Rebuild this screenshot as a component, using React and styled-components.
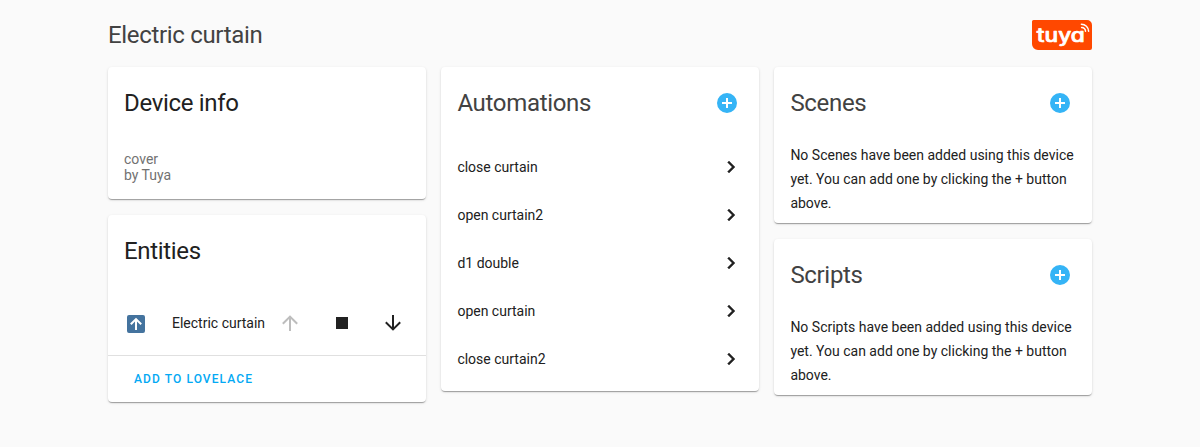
import React from "react";
import styled, { createGlobalStyle } from "styled-components";

const GlobalStyle = createGlobalStyle`
  body {
    margin: 0;
    background: #fafafa;
    color: #212121;
    font-family: Roboto, "Noto Sans", sans-serif;
    font-size: 14px;
    -webkit-font-smoothing: antialiased;
  }
  *, *::before, *::after { box-sizing: border-box; }
`;

const Page = styled.main`
  width: 984px;
  margin: 0 auto;
  padding: 20px 0 24px;
`;

const PageHeader = styled.header`
  display: flex;
  justify-content: space-between;
  align-items: center;
  height: 30px;
  margin-bottom: 17px;
`;

const PageTitle = styled.h1`
  margin: 0;
  font-size: 24px;
  font-weight: 400;
  line-height: 32px;
  letter-spacing: -0.32px;
  color: #424242;
`;

const Columns = styled.div`
  display: grid;
  grid-template-columns: 317.6px 317.2px 317.6px;
  gap: 15.8px;
  align-items: start;
`;

const Column = styled.div`
  display: flex;
  flex-direction: column;
  gap: 16px;
  min-width: 0;
`;

const Card = styled.section`
  background: #fff;
  border-radius: 4px;
  padding-bottom: ${(p) => p.$bottom ?? 8}px;
  box-shadow:
    0 2px 1px -1px rgba(0, 0, 0, 0.2),
    0 1px 1px 0 rgba(0, 0, 0, 0.14),
    0 1px 3px 0 rgba(0, 0, 0, 0.12);
`;

const CardHeader = styled.div`
  display: flex;
  justify-content: space-between;
  align-items: center;
  height: 76px;
  padding: 12px 20px 16px 16px;
`;

const CardTitle = styled.h2`
  margin: 0;
  font-size: 24px;
  font-weight: 400;
  line-height: 48px;
  letter-spacing: -0.32px;
  color: ${(p) => (p.$muted ? "#424242" : "#212121")};
`;

const IconButton = styled.button`
  display: flex;
  padding: 0;
  border: 0;
  background: none;
  color: ${(p) => p.$color || "#212121"};
`;

const DeviceDetails = styled.div`
  padding: 8px 16px 0;
  line-height: 16px;
  color: #727272;
`;

const EntityRow = styled.div`
  display: flex;
  align-items: center;
  height: 64px;
  padding: 0 20.6px 0 16px;
`;

const EntityName = styled.span`
  flex: 1;
  margin-left: 24px;
  white-space: nowrap;
`;

const CoverControls = styled.div`
  display: flex;
  gap: 27.5px;
`;

const CardActions = styled.div`
  display: flex;
  align-items: center;
  height: 47px;
  border-top: 1px solid #e0e0e0;
  padding: 0 26px;
`;

const TextButton = styled.button`
  padding: 0;
  border: 0;
  background: none;
  font-family: inherit;
  font-size: 12px;
  font-weight: 500;
  letter-spacing: 1.1px;
  text-transform: uppercase;
  color: #03a9f4;
`;

const AutomationRow = styled.div`
  display: flex;
  justify-content: space-between;
  align-items: center;
  height: 48px;
  padding: 0 16px;
`;

const EmptyText = styled.p`
  margin: 0;
  padding: 0 16px;
  line-height: 24px;
`;

const Svg = styled.svg`
  display: block;
  flex: none;
  fill: currentColor;
  stroke: currentColor;
  stroke-width: ${(p) => p.$weight || 0};
`;

const icons = {
  plus: "M17,13H13V17H11V13H7V11H11V7H13V11H17M12,2A10,10 0 0,0 2,12A10,10 0 0,0 12,22A10,10 0 0,0 22,12A10,10 0 0,0 12,2Z",
  next: "M8.59,16.58L13.17,12L8.59,7.41L10,6L16,12L10,18L8.59,16.58Z",
  up: "M13,20H11V8L5.5,13.5L4.08,12.08L12,4.16L19.92,12.08L18.5,13.5L13,8V20Z",
  down: "M11,4H13V16L18.5,10.5L19.92,11.92L12,19.84L4.08,11.92L5.5,10.5L11,16V4Z",
  stop: "M18,18H6V6H18V18Z",
  upBox: "M21,19A2,2 0 0,1 19,21H5A2,2 0 0,1 3,19V5A2,2 0 0,1 5,3H19A2,2 0 0,1 21,5V19M13,18V9.5L16.5,13L17.92,11.58L12,5.66L6.08,11.58L7.5,13L11,9.5V18H13Z",
};

function Icon({ name, weight }) {
  return (
    <Svg width="24" height="24" viewBox="0 0 24 24" $weight={weight} aria-hidden="true">
      <path d={icons[name]} />
    </Svg>
  );
}

const StateIcon = styled.span`
  padding-top: 2px;
  color: #44739e;
`;

const LogoText = styled.text`
  font-family: Inter, sans-serif;
  font-size: 18.5px;
  font-weight: 500;
  font-feature-settings: "cv11";
  fill: #fff;
  stroke: #fff;
  stroke-width: 0.7px;
  stroke-linejoin: round;
`;

function TuyaLogo() {
  return (
    <svg width="60" height="30" viewBox="0 0 60 30" aria-label="Tuya">
      <path
        fill="#ff4800"
        d="M1.5 0H55A5 5 0 0 1 60 5V28A2 2 0 0 1 58 30H6A6 6 0 0 1 0 24V1.5A1.5 1.5 0 0 1 1.5 0Z"
      />
      <LogoText x="4.8" y="21.6" textLength="48" lengthAdjust="spacingAndGlyphs">
        tuya
      </LogoText>
      <g fill="none" stroke="#fff" strokeWidth="1.5" strokeLinecap="round">
        <path d="M49.4 4.2A7.2 7.2 0 0 1 56.6 11.2" />
        <path d="M49.6 7.4A3.8 3.8 0 0 1 53.5 11.2" />
      </g>
    </svg>
  );
}

const automations = ["close curtain", "open curtain2", "d1 double", "open curtain", "close curtain2"];

function AddHeader({ title }) {
  return (
    <CardHeader>
      <CardTitle $muted>{title}</CardTitle>
      <IconButton $color="#35b4f6" aria-label={`Add to ${title}`}>
        <Icon name="plus" />
      </IconButton>
    </CardHeader>
  );
}

function EmptyCard({ title }) {
  return (
    <Card>
      <AddHeader title={title} />
      <EmptyText>
        {`No ${title} have been added using this device yet. You can add one by clicking the + button above.`}
      </EmptyText>
    </Card>
  );
}

export default function App() {
  return (
    <>
      <GlobalStyle />
      <Page>
        <PageHeader>
          <PageTitle>Electric curtain</PageTitle>
          <TuyaLogo />
        </PageHeader>
        <Columns>
          <Column>
            <Card $bottom={16}>
              <CardHeader>
                <CardTitle>Device info</CardTitle>
              </CardHeader>
              <DeviceDetails>
                <div>cover</div>
                <div>by Tuya</div>
              </DeviceDetails>
            </Card>
            <Card $bottom={0}>
              <CardHeader>
                <CardTitle>Entities</CardTitle>
              </CardHeader>
              <EntityRow>
                <StateIcon>
                  <Icon name="upBox" />
                </StateIcon>
                <EntityName>Electric curtain</EntityName>
                <CoverControls>
                  <IconButton $color="#bdbdbd" aria-label="Open" disabled>
                    <Icon name="up" />
                  </IconButton>
                  <IconButton aria-label="Stop">
                    <Icon name="stop" />
                  </IconButton>
                  <IconButton aria-label="Close">
                    <Icon name="down" />
                  </IconButton>
                </CoverControls>
              </EntityRow>
              <CardActions>
                <TextButton>Add to Lovelace</TextButton>
              </CardActions>
            </Card>
          </Column>
          <Column>
            <Card>
              <AddHeader title="Automations" />
              {automations.map((name) => (
                <AutomationRow key={name}>
                  <span>{name}</span>
                  <Icon name="next" weight={0.4} />
                </AutomationRow>
              ))}
            </Card>
          </Column>
          <Column>
            <EmptyCard title="Scenes" />
            <EmptyCard title="Scripts" />
          </Column>
        </Columns>
      </Page>
    </>
  );
}
